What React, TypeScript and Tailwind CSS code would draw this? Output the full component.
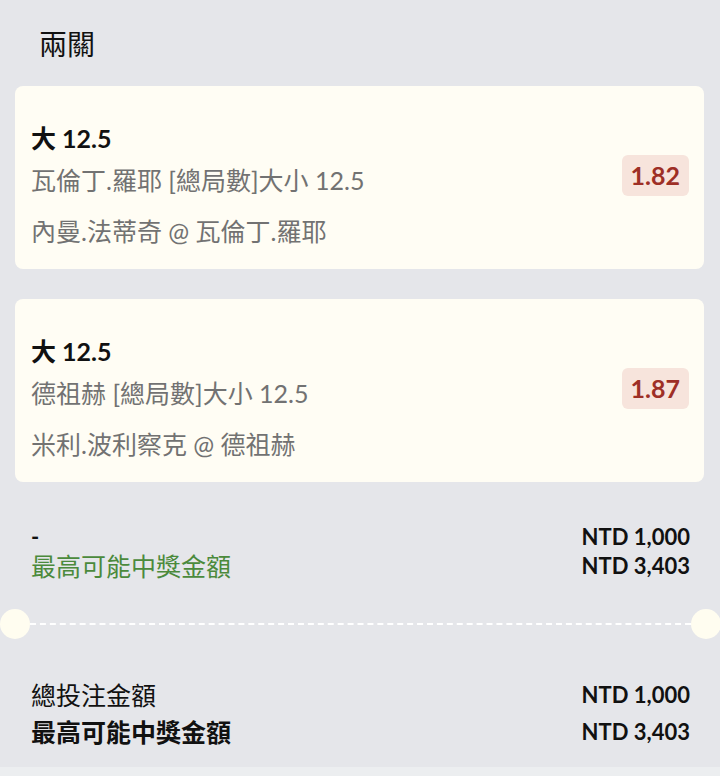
import React from "react";

const font = { fontFamily: "Lato, 'Noto Sans CJK TC', 'Noto Sans', sans-serif" };

function BetCard({ title, market, match, odds }: { title: string; market: string; match: string; odds: string }) {
  return (
    <div className="mx-[15px] w-[689px] h-[183px] rounded-[8px] bg-[#fffdf4] flex pl-[16px] pr-[15px]">
      <div className="flex-1 flex flex-col pt-[36px]">
        <div className="h-[32px] leading-[32px] text-[25px] font-bold text-[#111]">{title}</div>
        <div className="mt-[10px] h-[32px] leading-[32px] text-[25px] text-[#727272]">{market}</div>
        <div className="mt-[19px] h-[32px] leading-[32px] text-[25px] text-[#727272]">{match}</div>
      </div>
      <div className="self-center mt-[-5px] h-[41px] px-[9px] rounded-[6px] bg-[#f7e4dc] text-[#9e2f26] text-[25px] font-bold leading-[41px]">
        {odds}
      </div>
    </div>
  );
}

export default function App() {
  return (
    <div className="w-[720px] h-[776px] bg-[#e5e6ea] overflow-hidden flex flex-col" style={font}>
      <div className="h-[86px] pl-[39px] pt-[27px] text-[28px] leading-[34px] text-[#111]">兩關</div>
      <BetCard
        title="大 12.5"
        market="瓦倫丁.羅耶 [總局數]大小 12.5"
        match="內曼.法蒂奇 @ 瓦倫丁.羅耶"
        odds="1.82"
      />
      <div className="h-[30px]" />
      <BetCard
        title="大 12.5"
        market="德祖赫 [總局數]大小 12.5"
        match="米利.波利察克 @ 德祖赫"
        odds="1.87"
      />
      <div className="px-[31px] pr-[30px] pt-[40px] flex justify-between">
        <div className="flex flex-col">
          <div className="h-[29px] leading-[29px] text-[22px] font-bold text-[#111]">-</div>
          <div className="h-[30px] leading-[30px] text-[25px] text-[#4b8a3c]">最高可能中獎金額</div>
        </div>
        <div className="flex flex-col items-end">
          <div className="h-[29px] leading-[29px] text-[22px] font-bold text-[#111]">NTD 1,000</div>
          <div className="h-[29px] leading-[29px] text-[22px] font-bold text-[#111]">NTD 3,403</div>
        </div>
      </div>
      <div className="mt-[28px] flex items-center h-[30px]">
        <div className="w-[30px] h-[30px] rounded-full bg-[#fffdf0] shrink-0" />
        <div className="flex-1 h-0 border-t-2 border-dashed border-white" />
        <div className="w-[30px] h-[30px] rounded-full bg-[#fffdf0] shrink-0 mr-[-1px]" />
      </div>
      <div className="px-[31px] pr-[30px] pt-[38px] flex justify-between">
        <div className="flex flex-col">
          <div className="h-[36px] leading-[36px] text-[25px] text-[#111]">總投注金額</div>
          <div className="h-[38px] leading-[38px] text-[25px] font-bold text-[#111]">最高可能中獎金額</div>
        </div>
        <div className="flex flex-col items-end">
          <div className="h-[36px] leading-[36px] text-[22px] font-bold text-[#111]">NTD 1,000</div>
          <div className="h-[38px] leading-[38px] text-[22px] font-bold text-[#111]">NTD 3,403</div>
        </div>
      </div>
      <div className="flex-1" />
      <div className="h-[9px] bg-[#eceef0]" />
    </div>
  );
}
